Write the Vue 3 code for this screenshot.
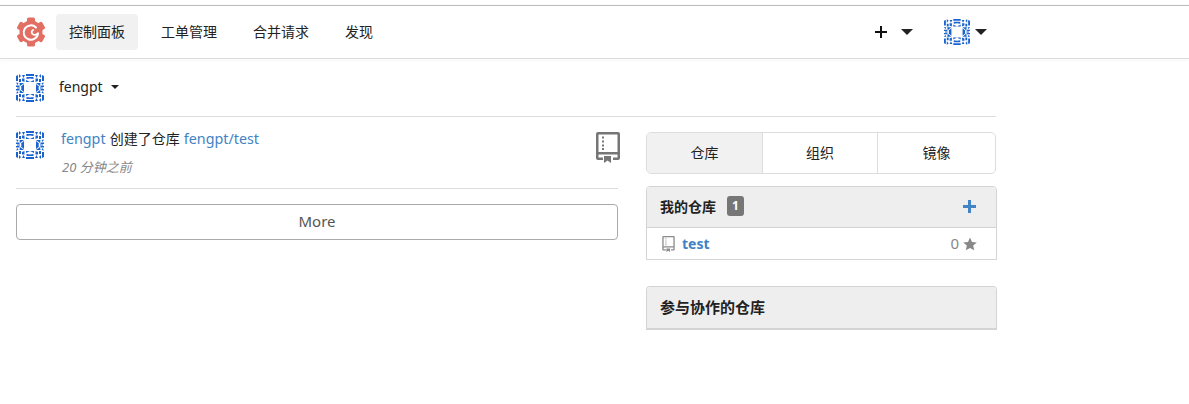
<template>
  <div class="page">
    <svg class="defs" width="0" height="0">
      <symbol id="identicon" viewBox="0 0 28 28">
        <path
          v-for="m in mirrors"
          :key="m"
          :transform="m"
          fill="#1a63cf"
          d="M0 2l2-1v6H0zM3 0l2 2-2 2zM3 5h2v3H3zM6 1h3l-1.500 3zM6 4.500h2.500V8L6 7zM10 0h4v2h-4zM10.500 3H14v1.500l-3.500.5zM10 6l4 2h-4zM0 8.500l2.500.5-1 2zM3.500 9H8l-4 3zM0 11.500h3.500V13H0zM1 13.500h3V14H1zM5 12.500L8 10v4H5.500z"
        />
      </symbol>
      <symbol id="book" viewBox="0 0 24 31">
        <path fill-rule="evenodd" d="M2 0h20a2 2 0 0 1 2 2v24a2 2 0 0 1-2 2h-5v-2.500h4.500v-3h-19v3H7V28H2a2 2 0 0 1-2-2V2a2 2 0 0 1 2-2zm.5 2.500V20h19V2.500z" />
        <path d="M6 4.500h2v2H6zM6 8.500h2v2H6zM6 12.500h2v2H6zM6 16h2v2H6z" />
        <path d="M8 24h7v7l-3.500-2.400L8 31z" />
      </symbol>
    </svg>

    <header class="navbar">
      <svg class="logo" viewBox="0 0 30 30">
        <g fill="#e26f63">
          <circle cx="15" cy="15" r="11.500" />
          <rect v-for="r in [0, 60, 120]" :key="r" x="11" y="0.500" width="8" height="29" rx="1.500" :transform="`rotate(${r} 15 15)`" />
        </g>
        <path fill="none" stroke="#fff" stroke-width="2" stroke-linecap="round" d="M20 10.500A7.200 7.200 0 1 0 22 16.500" />
        <path fill="none" stroke="#fff" stroke-width="1.800" stroke-linecap="round" d="M22 16.500c-1.600 1.600-4.500 1.800-5.800.2-1-1.300-.4-3.200 1-3.700" />
      </svg>
      <nav class="nav-items">
        <a v-for="(item, i) in navItems" :key="item" class="nav-item" :class="{ active: i === 0 }">{{ item }}</a>
      </nav>
      <div class="nav-right">
        <span class="nav-plus"><svg viewBox="0 0 12 12" width="12" height="12"><path d="M5 0h2v5h5v2H7v5H5V7H0V5h5z" fill="#111" /></svg></span>
        <span class="caret nav-caret"></span>
        <svg class="avatar-nav"><use href="#identicon" /></svg>
        <span class="caret"></span>
      </div>
    </header>

    <main class="container">
      <div class="user-row">
        <svg class="avatar"><use href="#identicon" /></svg>
        <span class="user-name">fengpt</span>
        <span class="caret small"></span>
      </div>

      <div class="columns">
        <section class="feed">
          <div class="feed-item">
            <svg class="avatar"><use href="#identicon" /></svg>
            <div class="feed-text">
              <p class="feed-title"><a>fengpt</a> 创建了仓库 <a>fengpt/test</a></p>
              <p class="feed-time">20 分钟之前</p>
            </div>
            <svg class="book-large"><use href="#book" /></svg>
          </div>
          <button class="more">More</button>
        </section>

        <aside class="side">
          <div class="tabs">
            <a v-for="(tab, i) in tabs" :key="tab" class="tab" :class="{ active: i === 0 }">{{ tab }}</a>
          </div>

          <div class="panel">
            <div class="panel-head">
              <span>我的仓库</span>
              <span class="badge">1</span>
              <svg class="panel-plus" viewBox="0 0 13 13"><path d="M5 0h3v5h5v3H8v5H5V8H0V5h5z" fill="#4183c4" /></svg>
            </div>
            <div class="repo-row">
              <svg class="book-small"><use href="#book" /></svg>
              <a class="repo-name">test</a>
              <span class="stars">0</span>
              <svg class="star" viewBox="0 0 14 14"><path d="M7 .5l2 4.400 4.800.5-3.600 3.200 1 4.700L7 10.900l-4.200 2.400 1-4.700L.2 5.400 5 4.900z" fill="#888" /></svg>
            </div>
          </div>

          <div class="panel collab">
            <div class="panel-head">参与协作的仓库</div>
          </div>
        </aside>
      </div>
    </main>
  </div>
</template>

<script setup>
const navItems = ['控制面板', '工单管理', '合并请求', '发现']
const tabs = ['仓库', '组织', '镜像']

// the avatar is one corner drawn four times, mirrored
const mirrors = [
  'matrix(1 0 0 1 0 0)',
  'matrix(-1 0 0 1 28 0)',
  'matrix(1 0 0 -1 0 28)',
  'matrix(-1 0 0 -1 28 28)'
]
</script>

<style>
html, body {
  margin: 0;
  background: #fff;
}
</style>

<style scoped>
.page {
  width: 1189px;
  height: 404px;
  overflow: hidden;
  font-family: "Noto Sans", "Noto Sans CJK SC", sans-serif;
  font-size: 14px;
  color: #222;
  background: #fff;
}

.defs {
  position: absolute;
}

.navbar {
  display: flex;
  align-items: center;
  box-sizing: border-box;
  height: 54px;
  margin-top: 5px;
  padding: 0 0 0 16px;
  border-top: 1px solid #bbb;
  border-bottom: 1px solid #ddd;
  box-shadow: 0 1px 4px rgba(0, 0, 0, 0.04);
}

.logo {
  width: 30px;
  height: 30px;
  margin-right: 10px;
}

.nav-items {
  display: flex;
  gap: 10px;
}

.nav-item {
  height: 36px;
  line-height: 36px;
  padding: 0 13px;
  border-radius: 4px;
  color: #222;
}

.nav-item.active {
  background: #f1f1f1;
}

.nav-right {
  display: flex;
  align-items: center;
  margin-left: 489px;
}

.nav-plus {
  display: flex;
}

.nav-caret {
  margin-left: 14px;
  margin-right: 31px;
}

.avatar-nav {
  width: 26px;
  height: 26px;
  margin-right: 5px;
}

.caret {
  width: 0;
  height: 0;
  border-left: 6px solid transparent;
  border-right: 6px solid transparent;
  border-top: 6px solid #222;
}

.caret.small {
  margin-left: 8px;
  margin-top: -2px;
  border-left-width: 4.500px;
  border-right-width: 4.500px;
  border-top-width: 4.500px;
}

.container {
  width: 980px;
  margin-left: 16px;
}

.user-row {
  display: flex;
  align-items: center;
  box-sizing: border-box;
  height: 58px;
  border-bottom: 1px solid #ddd;
}

.avatar {
  flex: none;
  width: 28px;
  height: 28px;
}

.user-name {
  margin-left: 15px;
  margin-top: -2px;
  color: #222;
}

.columns {
  display: flex;
  gap: 28px;
  padding-top: 15px;
}

.feed {
  flex: none;
  width: 602px;
}

.feed-item {
  display: flex;
  height: 57px;
  border-bottom: 1px solid #ddd;
  margin-top: -1px;
}

.feed-text {
  flex: 1;
  margin-top: -2px;
  margin-left: 17px;
}

.feed-text p {
  margin: 0;
}

.feed-title {
  line-height: 20px;
  color: #222;
  font-size: 14px;
  word-spacing: 0.500px;
}

.feed-title a {
  color: #4183c4;
  font-size: 14.300px;
}

.feed-time {
  margin-top: 8px !important;
  margin-left: 1px !important;
  color: #888;
  font-size: 13px;
  font-style: italic;
  line-height: 20px;
}

.book-large {
  flex: none;
  width: 24px;
  height: 31px;
  margin-top: 1px;
  margin-right: -2px;
  fill: #767676;
}

.more {
  display: block;
  box-sizing: border-box;
  width: 100%;
  height: 36px;
  margin-top: 15px;
  padding: 0 0 2px;
  border: 1px solid #aaa;
  border-radius: 4px;
  background: #fff;
  color: #555;
  font-family: inherit;
  font-size: 15px;
}

.side {
  flex: none;
  width: 351px;
}

.tabs {
  display: flex;
  box-sizing: border-box;
  width: 350px;
  height: 42px;
  border: 1px solid #ddd;
  border-radius: 5px;
  overflow: hidden;
}

.tab {
  box-sizing: border-box;
  width: 115px;
  line-height: 40px;
  text-align: center;
  color: #222;
  font-size: 14px;
  border-left: 1px solid #ddd;
}

.tab:first-child {
  border-left: 0;
}

.tab:last-child {
  flex: 1;
}

.tab.active {
  background: #f1f1f1;
}

.panel {
  margin-top: 12px;
  border: 1px solid #d4d4d4;
  border-radius: 4px 4px 0 0;
}

.panel-head {
  display: flex;
  align-items: center;
  box-sizing: border-box;
  height: 40px;
  padding: 0 13px 2px;
  background: #eee;
  border-radius: 3px 3px 0 0;
  font-size: 14px;
  font-weight: 700;
  color: #222;
}

.badge {
  width: 17px;
  height: 20px;
  margin-left: 11px;
  border-radius: 3px;
  background: #767676;
  color: #fff;
  font-size: 12px;
  line-height: 20px;
  text-align: center;
}

.panel-plus {
  width: 13px;
  height: 13px;
  margin-left: auto;
  margin-right: 7px;
}

.repo-row {
  display: flex;
  align-items: center;
  height: 31px;
  padding: 0 19px 0 15px;
  border-top: 1px solid #d4d4d4;
}

.book-small {
  width: 13px;
  height: 16px;
  fill: #8a8a8a;
}

.repo-name {
  margin-left: 7px;
  color: #4183c4;
  font-weight: 700;
}

.stars {
  margin-left: auto;
  margin-top: -2px;
  color: #888;
  font-size: 15px;
}

.star {
  width: 14px;
  height: 14px;
  margin-left: 4px;
}

.collab {
  margin-top: 26px;
  border-bottom-width: 2px;
}

.collab .panel-head {
  height: 41px;
  font-size: 15px;
}
</style>
